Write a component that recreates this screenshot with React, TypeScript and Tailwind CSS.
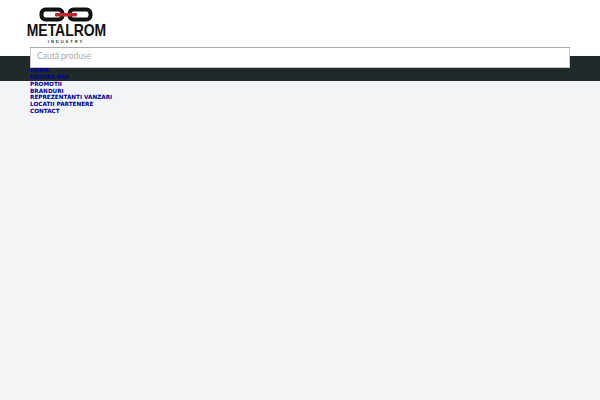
import React from 'react';

const menu = ['HOME', 'DESPRE NOI', 'PROMOTII', 'BRANDURI', 'REPREZENTANTI VANZARI', 'LOCATII PARTENERE', 'CONTACT'];

function Logo() {
  return (
    <div className="flex flex-col items-center w-[80px]">
      <svg width="54" height="15" viewBox="0 0 54 15" className="block">
        <rect x="2.5" y="2.5" width="21" height="10" rx="4" fill="none" stroke="#111" strokeWidth="4" />
        <rect x="30.5" y="2.5" width="21" height="10" rx="4" fill="none" stroke="#111" strokeWidth="4" />
        <rect x="16" y="6" width="22" height="3.5" rx="1" fill="#c0272d" />
      </svg>
      <div className="font-['Liberation_Sans',sans-serif] font-bold text-[17px] leading-[17px] text-[#111] scale-x-[0.82] whitespace-nowrap">METALROM</div>
      <div className="font-['Liberation_Sans',sans-serif] font-bold text-[4px] leading-[5px] tracking-[2px] text-[#333]">INDUSTRY</div>
    </div>
  );
}

export default function App() {
  return (
    <div className="min-h-[400px] bg-[#f3f4f6] font-['DejaVu_Sans',sans-serif]">
      <header className="h-[56px] bg-white px-[26px] pt-[7px]">
        <Logo />
      </header>

      <div className="h-[25px] bg-[#22292b]" />

      {/* search sits over the dark band */}
      <div className="relative z-10 mx-[30px] -mt-[34px] h-[21px]">
        <input
          placeholder="Caută produse"
          className="block w-full h-full bg-white border border-[#c8c8c8] border-t-[#aaa] px-[6px] pb-[3px] text-[8.5px] text-[#999] placeholder:text-[#aaa] font-['Lato',sans-serif] outline-none"
        />
      </div>

      <nav className="relative px-[30px] -mt-[1px]">
        <ul className="flex flex-col">
          {menu.map((item) => (
            <li key={item} className="h-[6.85px] leading-[7px] text-[5.7px] font-bold whitespace-nowrap">
              <a href="#" className="text-[#0000a0]">{item}</a>
            </li>
          ))}
        </ul>
      </nav>
    </div>
  );
}
